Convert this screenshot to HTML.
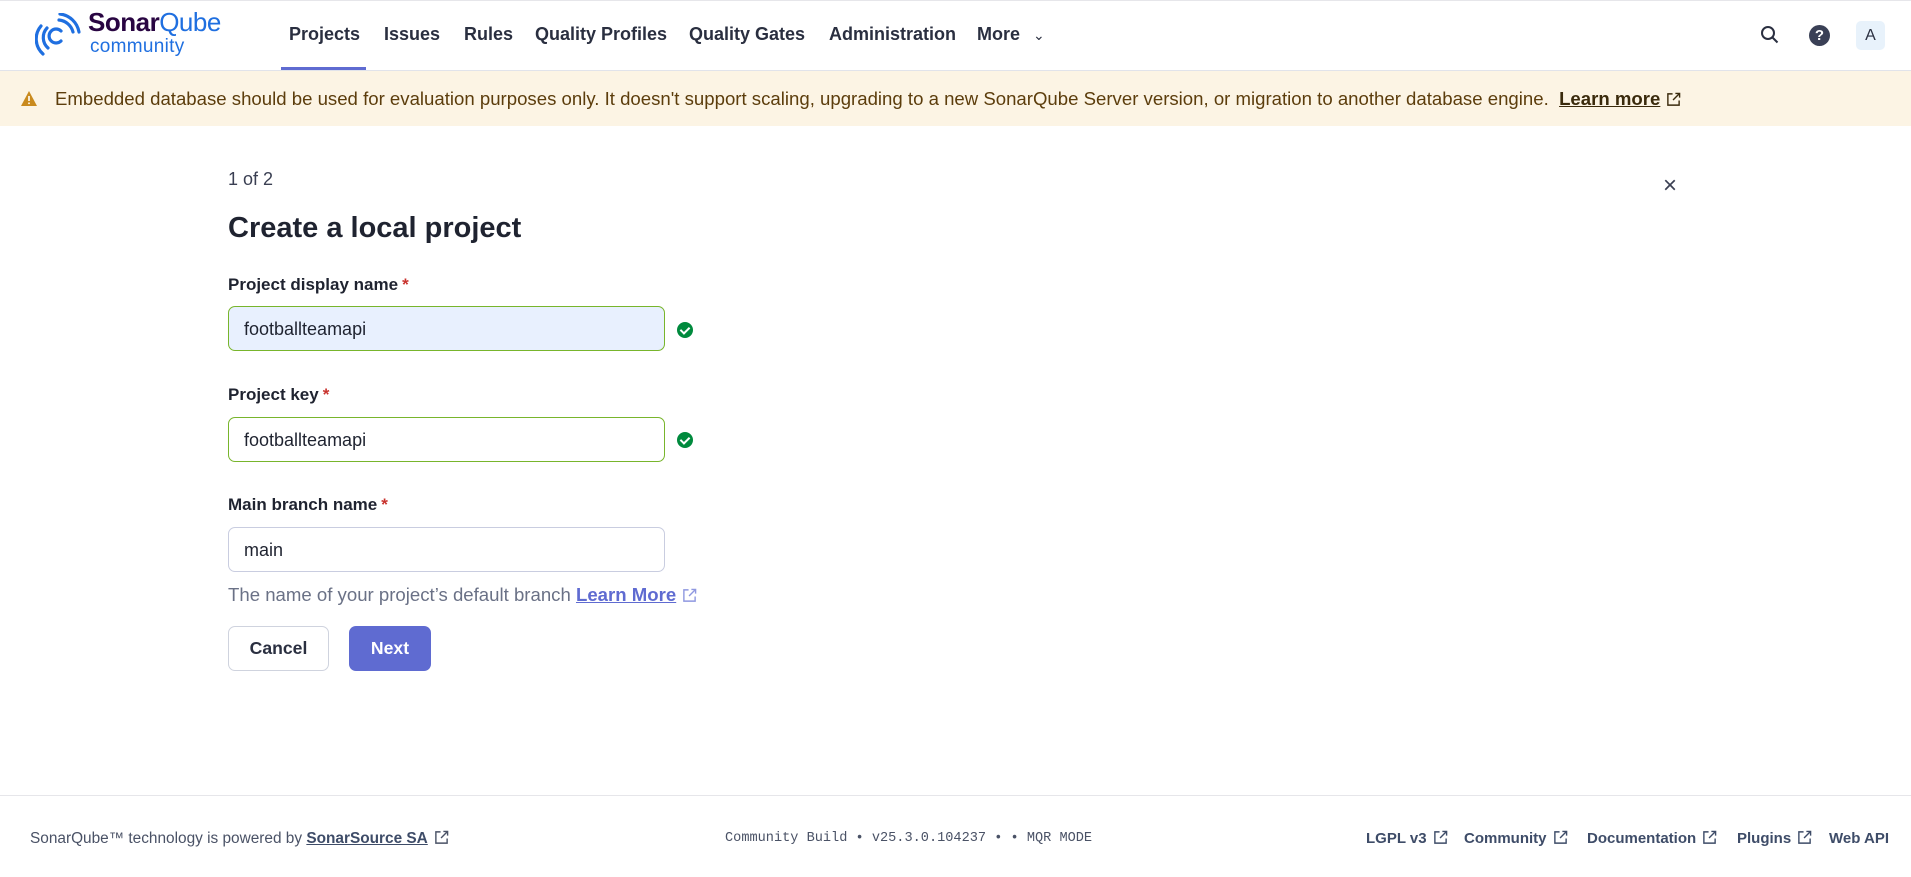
<!DOCTYPE html>
<html><head><meta charset="utf-8"><style>
*{box-sizing:border-box;margin:0;padding:0}
body{width:1911px;height:877px;background:#fff;font-family:"Liberation Sans",Arial,sans-serif;color:#2a2f40;position:relative;overflow:hidden}
.abs{position:absolute;white-space:nowrap}
.hdr{position:absolute;left:0;top:0;width:1911px;height:71px;border-top:1px solid #e6e6ea;border-bottom:1px solid #e1e3ea;background:#fff}
.nav{font-size:18px;font-weight:bold;color:#2a2f40;top:24px}
.banner{position:absolute;left:0;top:71px;width:1911px;height:55px;background:#fcf4e4}
.lbl{font-size:17px;font-weight:bold;color:#1f2330}
.lbl span{color:#c8322d;margin-left:4px}
.inp{position:absolute;left:228px;width:437px;height:45px;border:1px solid #78b52c;border-radius:7px;font-size:18px;padding:12px 0 0 15px;color:#1f2330}
.chk{position:absolute;left:677px;width:16px;height:16px;border-radius:50%;background:#008a3d}
.chk:after{content:"";position:absolute;left:5px;top:3px;width:4px;height:7px;border:solid #fff;border-width:0 2px 2px 0;transform:rotate(45deg)}
.ft{font-size:15.4px;color:#4a5266;top:830px}
.fl{font-size:15px;font-weight:bold;color:#3e4c68;top:830px}
.ext{display:inline-block;width:15px;height:15px;margin-left:6px;vertical-align:-2px}
</style></head><body>
<svg width="0" height="0" style="position:absolute"><symbol id="e" viewBox="0 0 16 16"><path d="M7 2H2v12h12V9M10 1.5h4.5V6M14.5 1.5L7.5 8.5" fill="none" stroke="currentColor" stroke-width="1.5"/></symbol></svg>
<div class="hdr"></div>
<svg class="abs" style="left:35px;top:13px" width="46" height="46" viewBox="0 0 46 46" fill="none" stroke="#1f6fe0" stroke-width="3.2" stroke-linecap="round">
<path d="M26 18a7 7 0 1 0 0 10"/>
<path d="M12 15a14 14 0 0 0 1 20"/>
<path d="M6 13a20 20 0 0 0 2 28"/>
<path d="M24 7a16 16 0 0 1 14 12"/>
<path d="M25 1a22 22 0 0 1 19 18"/>
</svg>
<div class="abs" style="left:88px;top:7px;font-size:26px;font-weight:bold;letter-spacing:-0.5px"><span style="color:#290542">Sonar</span><span style="color:#1f6fe0;font-weight:normal">Qube</span></div>
<div class="abs" style="left:90px;top:36px;font-size:19px;color:#1f6fe0;letter-spacing:0.3px">community</div>
<div class="abs nav" style="left:289px">Projects</div>
<div class="abs" style="left:281px;top:67px;width:85px;height:3px;background:#5f6bd1"></div>
<div class="abs nav" style="left:384px">Issues</div>
<div class="abs nav" style="left:464px">Rules</div>
<div class="abs nav" style="left:535px">Quality Profiles</div>
<div class="abs nav" style="left:689px">Quality Gates</div>
<div class="abs nav" style="left:829px">Administration</div>
<div class="abs nav" style="left:977px">More <span style="font-weight:normal;font-size:14px;margin-left:8px">&#8964;</span></div>
<svg class="abs" style="left:1760px;top:25px" width="20" height="20" viewBox="0 0 20 20" fill="none" stroke="#2a2f40" stroke-width="2"><circle cx="8" cy="8" r="6"/><path d="M12.5 12.5l5 5"/></svg>
<div class="abs" style="left:1809px;top:25px;width:21px;height:21px;border-radius:50%;background:#3a4056;color:#fff;font-size:15px;font-weight:bold;text-align:center;line-height:21px">?</div>
<div class="abs" style="left:1856px;top:21px;width:29px;height:29px;border-radius:5px;background:#e8f2fb;color:#2a2f40;font-size:16px;text-align:center;line-height:29px">A</div>
<div class="banner"></div>
<svg class="abs" style="left:20px;top:90px" width="18" height="17" viewBox="0 0 18 17"><path d="M9 1L17 16H1z" fill="#c98a1e"/><rect x="8.2" y="6" width="1.6" height="5" fill="#fff"/><rect x="8.2" y="12.5" width="1.6" height="1.6" fill="#fff"/></svg>
<div class="abs" style="left:55px;top:88px;font-size:18.6px;color:#5c3d0c">Embedded database should be used for evaluation purposes only. It doesn't support scaling, upgrading to a new SonarQube Server version, or migration to another database engine. &nbsp;<b style="text-decoration:underline;color:#3a2a0c">Learn more</b><svg class="ext" style="color:#3a2a0c"><use href="#e"/></svg></div>
<div class="abs" style="left:228px;top:169px;font-size:18px;color:#3a3f52">1 of 2</div>
<div class="abs" style="left:1663px;top:172px;font-size:24px;color:#3a3f52;font-weight:300">×</div>
<div class="abs" style="left:228px;top:212px;font-size:29px;font-weight:bold;color:#1f2330">Create a local project</div>
<div class="abs lbl" style="left:228px;top:275px">Project display name<span>*</span></div>
<div class="inp" style="top:306px;background:#e8f0fe">footballteamapi</div>
<div class="chk" style="top:322px"></div>
<div class="abs lbl" style="left:228px;top:385px">Project key<span>*</span></div>
<div class="inp" style="top:417px">footballteamapi</div>
<div class="chk" style="top:432px"></div>
<div class="abs lbl" style="left:228px;top:495px">Main branch name<span>*</span></div>
<div class="inp" style="top:527px;border-color:#c9cde0">main</div>
<div class="abs" style="left:228px;top:584px;font-size:18.6px;color:#6a7186">The name of your project’s default branch <b style="color:#5f6bd1;text-decoration:underline">Learn More</b><svg class="ext" style="color:#8f98e0"><use href="#e"/></svg></div>
<div class="abs" style="left:228px;top:626px;width:101px;height:45px;border:1px solid #cfd3de;border-radius:7px;font-size:17.6px;font-weight:bold;text-align:center;line-height:43px;color:#2a2f40">Cancel</div>
<div class="abs" style="left:349px;top:626px;width:82px;height:45px;background:#5f6bd1;border-radius:7px;font-size:17.6px;font-weight:bold;text-align:center;line-height:45px;color:#fff">Next</div>
<div class="abs" style="left:0;top:795px;width:1911px;height:1px;background:#e6e6ea"></div>
<div class="abs ft" style="left:30px">SonarQube™ technology is powered by <b style="text-decoration:underline;color:#3e4c68">SonarSource SA</b><svg class="ext"><use href="#e"/></svg></div>
<div class="abs ft" style="left:725px;top:831px;font-family:'Liberation Mono',monospace;font-size:13.6px">Community Build • v25.3.0.104237 • • MQR MODE</div>
<div class="abs fl" style="left:1366px">LGPL v3<svg class="ext"><use href="#e"/></svg></div>
<div class="abs fl" style="left:1464px">Community<svg class="ext"><use href="#e"/></svg></div>
<div class="abs fl" style="left:1587px">Documentation<svg class="ext"><use href="#e"/></svg></div>
<div class="abs fl" style="left:1737px">Plugins<svg class="ext"><use href="#e"/></svg></div>
<div class="abs fl" style="left:1829px">Web API</div>
</body></html>
